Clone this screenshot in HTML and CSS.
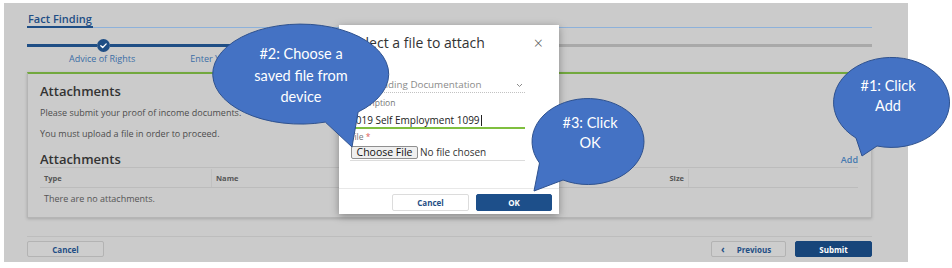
FILE: index.html
```html
<!DOCTYPE html>
<html lang="en">
<head>
<meta charset="utf-8">
<title>Fact Finding - Attachments</title>
<link rel="stylesheet" href="styles.css">
</head>
<body>
<div class="screen">
  <div class="tabs"><div class="tab">Fact Finding</div></div>

  <div class="stepper">
    <div class="track">
      <span class="seg seg-a"></span>
      <span class="dot"><svg width="13" height="13" viewBox="0 0 13 13"><polyline points="3.8,6.7 5.7,8.5 9.2,4.9" fill="none" stroke="#fff" stroke-width="1.3" stroke-linecap="round" stroke-linejoin="round"/></svg></span>
      <span class="seg seg-b"></span>
      <span class="seg seg-c"></span>
    </div>
    <div class="labels">
      <span class="lbl lbl-1">Advice of Rights</span>
      <span class="lbl lbl-2">Enter Your Income</span>
    </div>
  </div>

  <section class="panel">
    <h2 class="panel-title">Attachments</h2>
    <p class="note note-1">Please submit your proof of income documents.</p>
    <p class="note note-2">You must upload a file in order to proceed.</p>
    <div class="sub-head">
      <h3 class="sub-title">Attachments</h3>
      <a class="add-link">Add</a>
    </div>
    <div class="grid-head">
      <span class="cell">Type</span>
      <span class="cell cell-div">Name</span>
      <span class="cell cell-size">Size</span>
      <span class="cell cell-div"></span>
    </div>
    <div class="empty">There are no attachments.</div>
  </section>

  <div class="footer">
    <button class="btn btn-cancel">Cancel</button>
    <div class="footer-right">
      <button class="btn btn-prev"><span class="chev">&lsaquo;</span><span>Previous</span></button>
      <button class="btn btn-submit">Submit</button>
    </div>
  </div>
</div>

<div class="modal">
  <div class="m-head">
    <span class="m-title">Select a file to attach</span>
    <span class="m-close">&times;</span>
  </div>
  <div class="m-body">
    <div class="m-label m-label-type">Type <span class="req">*</span></div>
    <div class="m-select">
      <span class="m-select-text">Funding Documentation</span>
      <svg width="7" height="5" viewBox="0 0 7 5"><polyline points="1,1 3.5,3.5 6,1" fill="none" stroke="#8a8a8a" stroke-width="1"/></svg>
    </div>
    <div class="m-label m-label-desc">Description</div>
    <div class="m-input">2019 Self Employment 1099<span class="caret"></span></div>
    <div class="m-label m-label-file">File <span class="req">*</span></div>
    <div class="m-file"><span class="choose">Choose File</span><span class="nofile">No file chosen</span></div>
  </div>
  <div class="m-foot">
    <button class="m-btn m-cancel">Cancel</button>
    <button class="m-btn m-ok">OK</button>
  </div>
</div>

<svg class="callouts" width="952" height="268" viewBox="0 0 952 268">
  <path class="bubble" d="M 358.1 112 A 88 50 0 1 0 325.3 122.1 L 352 147 Z"/>
  <path class="bubble" d="M 877 146 A 58 45 0 1 0 856 138 L 862 156 Z"/>
  <path class="bubble" d="M 563 180 A 56 43 0 1 0 539.5 163 L 534 191 Z"/>
  <g class="btext">
    <text x="301" y="59">#2: Choose a</text>
    <text x="301" y="80.5">saved file from</text>
    <text x="301" y="102">device</text>
    <text x="888" y="91">#1: Click</text>
    <text x="888" y="111">Add</text>
    <text x="590" y="128">#3: Click</text>
    <text x="590" y="148">OK</text>
  </g>
</svg>
</body>
</html>
```

FILE: styles.css
```css
* { box-sizing: border-box; }
html, body { margin: 0; }
body {
  width: 952px;
  height: 268px;
  padding: 3px 0 0 4px;
  background: #ffffff;
  position: relative;
  overflow: hidden;
  font-family: "Open Sans", "Liberation Sans", sans-serif;
}

.screen {
  width: 904px;
  height: 259px;
  background: #cbcbcb;
  padding: 0 36px 0 23px;
  display: flex;
  flex-direction: column;
}

/* header tab */
.tabs {
  padding-top: 9px;
  border-bottom: 1px solid #8db1da;
  display: flex;
}
.tab {
  font-size: 11px;
  font-weight: 600;
  line-height: 14px;
  color: #1f4e85;
  border-bottom: 2px solid #1f4e85;
  margin-bottom: -1px;
  padding: 0 1px;
}

/* stepper */
.stepper { margin-top: 11px; }
.track {
  display: flex;
  align-items: center;
  height: 13px;
}
.seg { height: 3px; }
.seg-a { width: 70px; background: #1f4e85; }
.seg-b { width: 200px; background: #1f4e85; }
.seg-c { flex: 1; background: #a9a9a9; }
.dot {
  width: 13px;
  height: 13px;
  border-radius: 50%;
  background: #1f4e85;
  display: flex;
}
.labels {
  display: flex;
  margin-top: 1px;
  line-height: 12px;
}
.lbl { font-size: 9px; color: #3b6ea6; }
.lbl-1 { margin-left: 42px; }
.lbl-2 { margin-left: 55px; }

/* panel */
.panel {
  margin-top: 7px;
  height: 146px;
  border: 1px solid #b5b5b5;
  border-top: 2px solid #72a83e;
  padding: 8px 13px 0 12px;
  box-shadow: 0 1px 3px rgba(0, 0, 0, 0.18);
}
.panel-title {
  margin: 0;
  font-size: 13px;
  font-weight: 600;
  line-height: 18px;
  color: #333;
}
.note {
  margin: 7px 0 0;
  font-size: 9px;
  line-height: 12px;
  color: #4d4d4d;
}
.note-2 { margin-top: 9px; }
.sub-head {
  margin-top: 11px;
  height: 16px;
  display: flex;
  align-items: center;
  justify-content: space-between;
}
.sub-title {
  margin: 0;
  font-size: 13px;
  font-weight: 600;
  line-height: 16px;
  color: #333;
}
.add-link {
  font-size: 9px;
  font-weight: 600;
  color: #4679b0;
}
.grid-head {
  display: grid;
  grid-template-columns: 171px 1fr 89px 170px;
  height: 21px;
  align-items: center;
  border-top: 1px solid #bcbcbc;
  border-bottom: 1px solid #bcbcbc;
}
.cell {
  font-size: 7.5px;
  font-weight: 700;
  color: #555;
  padding-left: 4px;
  line-height: 18px;
  height: 18px;
}
.cell-div { border-left: 1px solid #c0c0c0; }
.cell-size { text-align: right; padding-right: 4px; }
.empty {
  font-size: 9px;
  color: #555;
  padding-left: 4px;
  line-height: 22px;
}

/* footer */
.footer {
  margin-top: 18px;
  border-top: 1px solid #bdbdbd;
  padding-top: 4px;
  display: flex;
  justify-content: space-between;
}
.footer-right { display: flex; gap: 9px; }
.btn {
  height: 16px;
  padding: 0;
  font-family: "Open Sans", "Liberation Sans", sans-serif;
  font-size: 8px;
  font-weight: 700;
  color: #1f4e85;
  background: #cdcdcd;
  border: 1px solid #b3b3b3;
  border-radius: 2px;
}
.btn-cancel { width: 77px; }
.btn-prev {
  width: 75px;
  display: flex;
  align-items: center;
  padding-left: 9px;
}
.chev { font-size: 10px; margin-right: 12px; line-height: 10px; }
.btn-submit {
  width: 77px;
  background: #17457a;
  border-color: #17457a;
  color: #fff;
}

/* modal */
.modal {
  position: absolute;
  left: 339px;
  top: 25px;
  width: 220px;
  height: 189px;
  background: #fff;
  box-shadow: 0 2px 8px rgba(0, 0, 0, 0.35);
  display: flex;
  flex-direction: column;
}
.m-head {
  padding: 10px 16px 0 11px;
  display: flex;
  justify-content: space-between;
  align-items: center;
  height: 26px;
}
.m-title {
  font-size: 14px;
  line-height: 16px;
  color: #333;
}
.m-close {
  font-size: 16px;
  line-height: 16px;
  color: #555;
  font-weight: 300;
}
.m-body { padding: 0 34px 0 11px; }
.m-label {
  font-size: 8.5px;
  line-height: 10px;
  color: #777;
}
.m-label-type { margin-top: 13px; }
.m-label-desc { margin-top: 5px; }
.m-label-file { margin-top: 3px; }
.req { color: #e05a5a; }
.m-select {
  margin-top: 4px;
  height: 15px;
  line-height: 14px;
  font-size: 9.8px;
  color: #8a8a8a;
  border-bottom: 1px dotted #c2c2c2;
  display: flex;
  justify-content: space-between;
  align-items: center;
  padding-right: 2px;
}
.m-select-text { padding-left: 21px; }
.m-input {
  margin-top: 5px;
  height: 16px;
  line-height: 14px;
  font-size: 10px;
  color: #222;
  border-bottom: 2px solid #7fbf3f;
  display: flex;
  align-items: center;
}
.caret {
  width: 1px;
  height: 11px;
  background: #222;
  margin-left: 1px;
}
.m-file {
  margin-top: 4px;
  height: 15px;
  border-bottom: 1px solid #dcdcdc;
  display: flex;
  align-items: flex-start;
}
.choose {
  margin-left: 1px;
  width: 67px;
  height: 13px;
  line-height: 11px;
  font-size: 10.5px;
  color: #111;
  text-align: center;
  background: #efefef;
  border: 1px solid #8f8f8f;
  border-radius: 2px;
}
.nofile {
  margin-left: 2px;
  font-size: 10px;
  line-height: 13px;
  color: #333;
}
.m-foot {
  margin-top: auto;
  border-top: 1px solid #e8e8e8;
  padding: 5px 7px 3px;
  display: flex;
  justify-content: flex-end;
  gap: 7px;
}
.m-btn {
  height: 17px;
  padding: 0;
  font-family: "Open Sans", "Liberation Sans", sans-serif;
  font-size: 8px;
  font-weight: 700;
  border-radius: 2px;
}
.m-cancel {
  width: 77px;
  background: #fff;
  color: #1f4e85;
  border: 1px solid #dcdcdc;
}
.m-ok {
  width: 76px;
  background: #1d4f8a;
  color: #fff;
  border: 1px solid #1d4f8a;
}

/* callouts */
.callouts {
  position: absolute;
  left: 0;
  top: 0;
}
.bubble {
  fill: #4472c4;
  stroke: #2f528f;
  stroke-width: 1;
}
.btext text {
  font-family: Lato, "Open Sans", sans-serif;
  font-size: 14.5px;
  fill: #fff;
  text-anchor: middle;
}
```
